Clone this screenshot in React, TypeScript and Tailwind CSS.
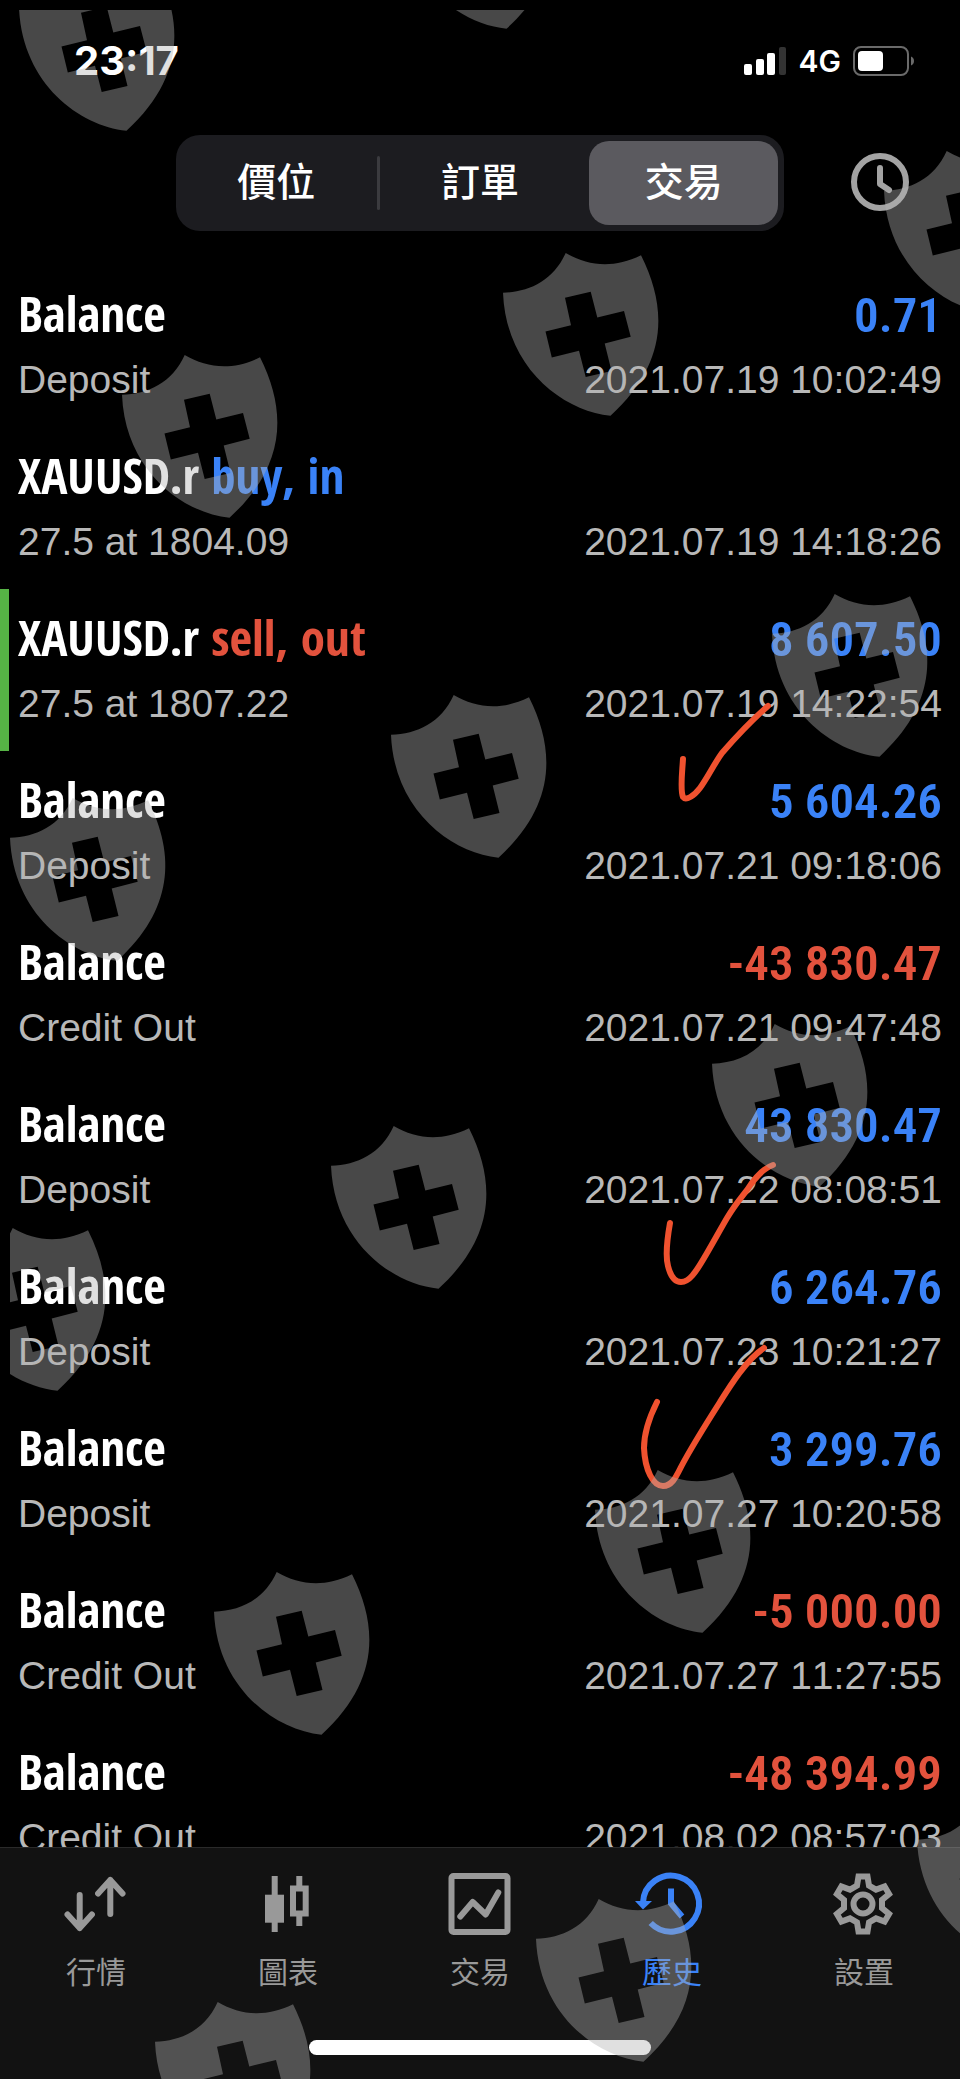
import React from 'react';

type Deal = {
    title: string;
    side?: string;
    detail: string;
    amount?: string;
    time: string;
    active?: boolean;
};

const deals: Deal[] = [
    { title: 'Balance', detail: 'Deposit', amount: '0.71', time: '2021.07.19 10:02:49' },
    { title: 'XAUUSD.r', side: 'buy, in', detail: '27.5 at 1804.09', time: '2021.07.19 14:18:26' },
    {
        title: 'XAUUSD.r',
        side: 'sell, out',
        detail: '27.5 at 1807.22',
        amount: '8 607.50',
        time: '2021.07.19 14:22:54',
        active: true,
    },
    { title: 'Balance', detail: 'Deposit', amount: '5 604.26', time: '2021.07.21 09:18:06' },
    { title: 'Balance', detail: 'Credit Out', amount: '-43 830.47', time: '2021.07.21 09:47:48' },
    { title: 'Balance', detail: 'Deposit', amount: '43 830.47', time: '2021.07.22 08:08:51' },
    { title: 'Balance', detail: 'Deposit', amount: '6 264.76', time: '2021.07.23 10:21:27' },
    { title: 'Balance', detail: 'Deposit', amount: '3 299.76', time: '2021.07.27 10:20:58' },
    { title: 'Balance', detail: 'Credit Out', amount: '-5 000.00', time: '2021.07.27 11:27:55' },
    { title: 'Balance', detail: 'Credit Out', amount: '-48 394.99', time: '2021.08.02 08:57:03' },
];

const shields = [
    [19, -32],
    [399, -134],
    [884, 151],
    [503, 253],
    [122, 355],
    [772, 594],
    [391, 695],
    [10, 798],
    [712, 1024],
    [331, 1126],
    [-50, 1228],
    [595, 1470],
    [214, 1572],
    [917, 1800],
    [536, 1899],
    [155, 2002],
];

const StatusBar = () => (
    <div className="flex h-[122px] items-center justify-between pl-[74px] pr-[44px]">
        <span className="font-['Inter'] text-[40px] font-bold leading-none">23:17</span>
        <div className="flex items-center gap-3">
            <svg width="43" height="30" viewBox="0 0 43 30" fill="white">
                <rect x="0" y="18" width="8" height="11" rx="2" />
                <rect x="12" y="13" width="8" height="16" rx="2" />
                <rect x="23" y="7" width="8" height="22" rx="2" />
                <rect x="35" y="1" width="7" height="28" rx="2" fill="#333333" />
            </svg>
            <span className="font-['Inter'] text-[30px] font-semibold leading-none">4G</span>
            <svg width="63" height="30" viewBox="0 0 63 30">
                <rect x="1" y="1" width="54" height="28" rx="7" fill="none" stroke="#6a6a6a" strokeWidth="2" />
                <rect x="5" y="5" width="25" height="20" rx="4" fill="white" />
                <path d="M58 10.500c4 1.500 4 7.500 0 9z" fill="#6a6a6a" />
            </svg>
        </div>
    </div>
);

const Header = () => (
    <header className="flex items-center gap-[66px] pt-[13px] pb-[34px] pl-44 pr-[50px]">
        <div className="flex h-24 flex-1 items-center rounded-3xl bg-[#1c1c20] p-[6px] text-[39px] font-medium">
            <button type="button" className="h-full flex-1">
                價位
            </button>
            <div className="mx-[6px] h-[54px] w-[3px] rounded-full bg-[#3b3b3f]" />
            <button type="button" className="mr-[15px] h-full flex-1">
                訂單
            </button>
            <button type="button" className="h-full flex-1 rounded-[20px] bg-[#5b5a5f]">
                交易
            </button>
        </div>
        <button type="button" aria-label="History period">
            <svg width="60" height="60" viewBox="0 0 60 60" fill="none" stroke="#a3a3a3" strokeWidth="6">
                <circle cx="30" cy="29" r="26" />
                <path d="M30 15v16l9 6" strokeLinecap="round" strokeLinejoin="round" />
            </svg>
        </button>
    </header>
);

const DealRow = ({ deal }: { deal: Deal }) => (
    <li
        className={`border-l-[9px] pt-[18px] pb-[23px] pl-[9px] pr-[18px] ${
            deal.active ? 'border-[#56b345]' : 'border-transparent'
        }`}
    >
        <div className="flex h-[60px] items-baseline justify-between font-['Open_Sans_Condensed'] text-[49px] font-bold leading-[60px]">
            <h2>
                {deal.title}
                {deal.side && (
                    <span className={deal.side.startsWith('buy') ? 'text-[#3a82f7]' : 'text-[#e2523d]'}>
                        {' '}
                        {deal.side}
                    </span>
                )}
            </h2>
            {deal.amount && (
                <span
                    className={`font-['Roboto_Condensed'] font-semibold ${
                        deal.amount.startsWith('-') ? 'text-[#e2523d]' : 'text-[#3a82f7]'
                    }`}
                >
                    {deal.amount}
                </span>
            )}
        </div>
        <div className="mt-[13px] flex justify-between text-[39px] leading-[48px] text-[#b8b8b8] [font-kerning:none]">
            <span>{deal.detail}</span>
            <time>{deal.time}</time>
        </div>
    </li>
);

const QuotesIcon = () => (
    <g strokeLinecap="round" strokeLinejoin="round">
        <path d="M15.700 23v33M3.500 42.500l12.200 13.500 12.200-13.500" />
        <path d="M46.300 42V8M34.100 21.500L46.300 8l12.200 13.500" />
    </g>
);

const ChartIcon = () => (
    <>
        <path d="M18.700 4v56M43.300 4v10M43.300 43v11" />
        <rect x="9" y="22.700" width="19" height="28" fill="currentColor" stroke="none" />
        <rect x="37" y="16.500" width="12.700" height="25" />
    </>
);

const TradeIcon = () => (
    <g strokeLinecap="round" strokeLinejoin="round">
        <rect x="3.500" y="4" width="56" height="56" rx="2" />
        <path d="M12.300 44.500L24.700 30l13 12.500 12.600-22" />
    </g>
);

const HistoryIcon = () => (
    <>
        <path d="M3 30.500A28 28 0 1 1 10.700 51" />
        <path d="M31 16.500V31.500l11 13" />
        <path d="M-5 29H12L3 37.500z" fill="currentColor" stroke="none" />
    </>
);

const SettingsIcon = () => (
    <g transform="translate(31 32)">
        <path d="M-6-18.500L-4.500-27.500H4.500L6-18.500L13-14.400L21.600-17.600L26.100-9.900L19-4V4L26.100 9.900L21.600 17.600L13 14.400L6 18.500L4.500 27.500H-4.500L-6 18.500L-13 14.400L-21.600 17.600L-26.100 9.900L-19 4V-4L-26.100-9.900L-21.600-17.600L-13-14.400Z" />
        <circle r="9.500" />
    </g>
);

const tabs = [
    { label: '行情', icon: <QuotesIcon /> },
    { label: '圖表', icon: <ChartIcon /> },
    { label: '交易', icon: <TradeIcon /> },
    { label: '歷史', icon: <HistoryIcon />, current: true },
    { label: '設置', icon: <SettingsIcon /> },
];

const TabBar = () => (
    <nav className="border-t border-[#2a2a2a] bg-[#121212] pt-6 pb-6">
        <div className="grid grid-cols-5">
            {tabs.map((tab) => (
                <a
                    key={tab.label}
                    href="#"
                    className={`flex flex-col items-center gap-4 ${tab.current ? 'text-[#3a82f7]' : 'text-[#999999]'}`}
                >
                    <svg
                        width="64"
                        height="64"
                        viewBox="0 0 64 64"
                        fill="none"
                        stroke="currentColor"
                        strokeWidth="6"
                        overflow="visible"
                    >
                        {tab.icon}
                    </svg>
                    <span className="text-[30px] leading-[42px]">{tab.label}</span>
                </a>
            ))}
        </div>
        <div className="mx-auto mt-[46px] h-[15px] w-[342px] rounded-full bg-white" />
    </nav>
);

const Marks = () => (
    <svg
        className="pointer-events-none absolute inset-0 h-full w-full"
        fill="none"
        stroke="#f0522f"
        strokeWidth="6"
        strokeLinecap="round"
        strokeLinejoin="round"
    >
        <path d="M683 759C682 775 680 790 683 797C686 801 694 796 700 788C708 777 714 764 722 753C736 737 752 720 768 706" />
        <path d="M670 1223C667 1240 665 1255 668 1266C671 1278 676 1282 681 1282C689 1282 695 1274 707 1253C714 1241 720 1230 727 1218C734 1206 740 1199 747 1190C756 1176 764 1168 773 1165" />
        <path d="M657 1402C648 1420 644 1433 644 1448C645 1470 653 1486 663 1486C672 1486 676 1477 681 1467C692 1446 706 1424 720 1402C730 1386 746 1360 764 1348" />
    </svg>
);

const Watermark = () => (
    <div className="pointer-events-none absolute top-2.5 right-0 bottom-0 left-2.5 overflow-hidden opacity-40">
        <svg className="h-full w-full" fill="#b3b3b3" fillRule="evenodd">
            {shields.map(([x, y]) => (
                <path
                    key={`${x},${y}`}
                    transform={`translate(${x - 10} ${y - 10})`}
                    d="M0 39.700C26 39 50 28 62.700 0C85 13 110 16 138 2.300C166 58 163 112 107.500 162.700C60 158 3 115 0 39.700ZM62 44.700L68 72.300L42.500 78.500L48.800 104.500L76 97.800L82.700 124L108.500 118L101.700 90.500L127.700 83.700L121 58L94.300 64.500L87.700 38.700Z"
                />
            ))}
        </svg>
    </div>
);

const App = () => {
    return (
        <div className="relative flex h-screen flex-col overflow-hidden bg-black font-['Liberation_Sans','Noto_Sans_CJK_TC',sans-serif] text-white">
            <StatusBar />
            <Header />
            <ul className="min-h-0 flex-1 overflow-hidden">
                {deals.map((deal) => (
                    <DealRow key={deal.time} deal={deal} />
                ))}
            </ul>
            <TabBar />
            <Marks />
            <Watermark />
        </div>
    );
};

export default App;
